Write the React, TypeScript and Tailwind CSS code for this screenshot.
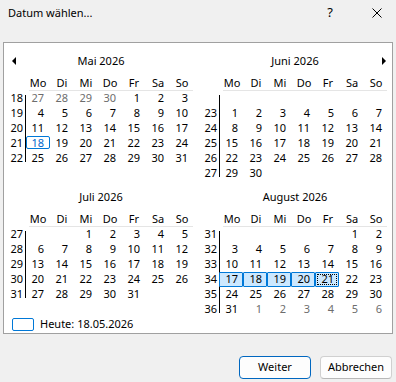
import type { ReactNode } from "react";

type Row = { wk: string; days: string[] };

interface Month {
  title: string;
  arrow?: "left" | "right";
  rows: Row[];
  lineRows: number;
}

// "~" = trailing day of the neighbour month, "" = empty cell
const months: Month[] = [
  {
    title: "Mai 2026",
    arrow: "left",
    lineRows: 5,
    rows: [
      { wk: "18", days: ["~27", "~28", "~29", "~30", "1", "2", "3"] },
      { wk: "19", days: ["4", "5", "6", "7", "8", "9", "10"] },
      { wk: "20", days: ["11", "12", "13", "14", "15", "16", "17"] },
      { wk: "21", days: ["18", "19", "20", "21", "22", "23", "24"] },
      { wk: "22", days: ["25", "26", "27", "28", "29", "30", "31"] }
    ]
  },
  {
    title: "Juni 2026",
    arrow: "right",
    lineRows: 6,
    rows: [
      { wk: "", days: ["", "", "", "", "", "", ""] },
      { wk: "23", days: ["1", "2", "3", "4", "5", "6", "7"] },
      { wk: "24", days: ["8", "9", "10", "11", "12", "13", "14"] },
      { wk: "25", days: ["15", "16", "17", "18", "19", "20", "21"] },
      { wk: "26", days: ["22", "23", "24", "25", "26", "27", "28"] },
      { wk: "27", days: ["29", "30", "", "", "", "", ""] }
    ]
  },
  {
    title: "Juli 2026",
    lineRows: 5,
    rows: [
      { wk: "27", days: ["", "", "1", "2", "3", "4", "5"] },
      { wk: "28", days: ["6", "7", "8", "9", "10", "11", "12"] },
      { wk: "29", days: ["13", "14", "15", "16", "17", "18", "19"] },
      { wk: "30", days: ["20", "21", "22", "23", "24", "25", "26"] },
      { wk: "31", days: ["27", "28", "29", "30", "31", "", ""] }
    ]
  },
  {
    title: "August 2026",
    lineRows: 6,
    rows: [
      { wk: "31", days: ["", "", "", "", "", "1", "2"] },
      { wk: "32", days: ["3", "4", "5", "6", "7", "8", "9"] },
      { wk: "33", days: ["10", "11", "12", "13", "14", "15", "16"] },
      { wk: "34", days: ["17", "18", "19", "20", "21", "22", "23"] },
      { wk: "35", days: ["24", "25", "26", "27", "28", "29", "30"] },
      { wk: "36", days: ["31", "~1", "~2", "~3", "~4", "~5", "~6"] }
    ]
  }
];

const weekdays = ["Mo", "Di", "Mi", "Do", "Fr", "Sa", "So"];

const Arrow = ({ dir }: { dir: "left" | "right" }) => (
  <svg width="5" height="8" viewBox="0 0 5 8">
    <path d={dir === "left" ? "M4 0 L0 4 L4 8 Z" : "M1 0 L5 4 L1 8 Z"} fill="#000" />
  </svg>
);

const DayCell = ({ month, day }: { month: string; day: string }) => {
  const gray = day.startsWith("~");
  const label = gray ? day.slice(1) : day;
  const isToday = month === "Mai 2026" && day === "18";
  const selected = month === "August 2026" && ["17", "18", "19", "20", "21"].includes(day);
  const focused = month === "August 2026" && day === "21";

  let box: ReactNode = null;
  if (isToday) {
    box = <div className="absolute left-0 top-0 h-[13px] w-[24px] rounded-[2px] border border-[#0078d7]" />;
  }
  if (selected) {
    box = (
      <div className="absolute left-[-1px] top-0 h-[15px] w-[24px] rounded-[1px] border border-[#0078d7] bg-[#cce8ff]">
        {focused ? <div className="absolute inset-[1px] border border-dotted border-black" /> : null}
      </div>
    );
  }

  return (
    <div
      className={[
        "relative flex h-[15px] w-[24px] items-center justify-end pr-[6px]",
        gray ? "text-[#6d6d6d]" : isToday ? "text-[#0066cc]" : "text-black"
      ].join(" ")}
    >
      {box}
      <span className="relative">{label}</span>
    </div>
  );
};

const MonthView = ({ month }: { month: Month }) => (
  <div className="flex w-[190px] flex-col">
    <div className="grid h-[18px] grid-cols-[22px_1fr_18px] items-center">
      <div className="flex justify-start pl-[8px]">{month.arrow === "left" ? <Arrow dir="left" /> : null}</div>
      <p className="text-center text-[11px] text-black">{month.title}</p>
      <div className="flex justify-end pr-[2px]">{month.arrow === "right" ? <Arrow dir="right" /> : null}</div>
    </div>

    <div className="mt-[6px] flex h-[14px] pl-[22px]">
      {weekdays.map((d) => (
        <div key={d} className="flex w-[24px] items-center justify-center text-[11px] text-black">
          {d}
        </div>
      ))}
    </div>
    <div className="ml-[25px] mr-[1px] h-px bg-[#e5e5e5]" />

    <div className="flex">
      <div className="flex w-[21px] flex-col">
        {Array.from({ length: 6 }).map((_, i) => (
          <div key={i} className="flex h-[15px] items-center justify-end pr-[2px] text-[11px] text-black">
            {month.rows[i]?.wk ?? ""}
          </div>
        ))}
      </div>
      <div className="w-px">
        <div className={month.lineRows === 6 ? "mt-[4px] h-[82px] bg-black" : "mt-[4px] h-[67px] bg-black"} />
      </div>
      <div className="flex flex-col text-[11px]">
        {month.rows.map((row, ri) => (
          <div key={ri} className="flex">
            {row.days.map((d, di) => (
              <DayCell key={di} month={month.title} day={d} />
            ))}
          </div>
        ))}
      </div>
    </div>
  </div>
);

export default function App() {
  return (
    <main className="flex h-[382px] w-[396px] flex-col bg-[#f0f0f0] font-['Noto_Sans',sans-serif] text-black">
      <header className="flex h-[26px] items-center pl-[8px]">
        <p className="text-[11px]">Datum wählen...</p>
        <span className="ml-auto w-[12px] text-center text-[13px]">?</span>
        <svg className="ml-[36px] mr-[14px]" width="10" height="10" viewBox="0 0 10 10">
          <path d="M0.5 0.5 L9.5 9.5 M9.5 0.5 L0.5 9.5" stroke="#000" strokeWidth="1" />
        </svg>
      </header>

      <section className="ml-[3px] mt-[16px] flex w-[390px] flex-col border border-[#a0a0a0] bg-white pt-[9px] pb-[2px]">
        <div className="flex gap-[4px]">
          <MonthView month={months[0]} />
          <MonthView month={months[1]} />
        </div>
        <div className="mt-[7px] flex gap-[4px]">
          <MonthView month={months[2]} />
          <MonthView month={months[3]} />
        </div>
        <div className="flex h-[14px] items-center pl-[8px]">
          <div className="h-[13px] w-[22px] rounded-[2px] border border-[#0078d7]" />
          <p className="ml-[6px] text-[11px]">Heute: 18.05.2026</p>
        </div>
      </section>

      <footer className="mt-auto mb-[3px] flex justify-end gap-[9px] pr-[4px]">
        <button
          type="button"
          className="h-[23px] w-[72px] rounded-[4px] border border-[#0067c0] bg-[#fdfdfd] text-[11px] text-black"
        >
          Weiter
        </button>
        <button
          type="button"
          className="h-[23px] w-[72px] rounded-[4px] border border-[#d0d0d0] border-b-[#b8b8b8] bg-[#fdfdfd] text-[11px] text-black"
        >
          Abbrechen
        </button>
      </footer>
    </main>
  );
}
